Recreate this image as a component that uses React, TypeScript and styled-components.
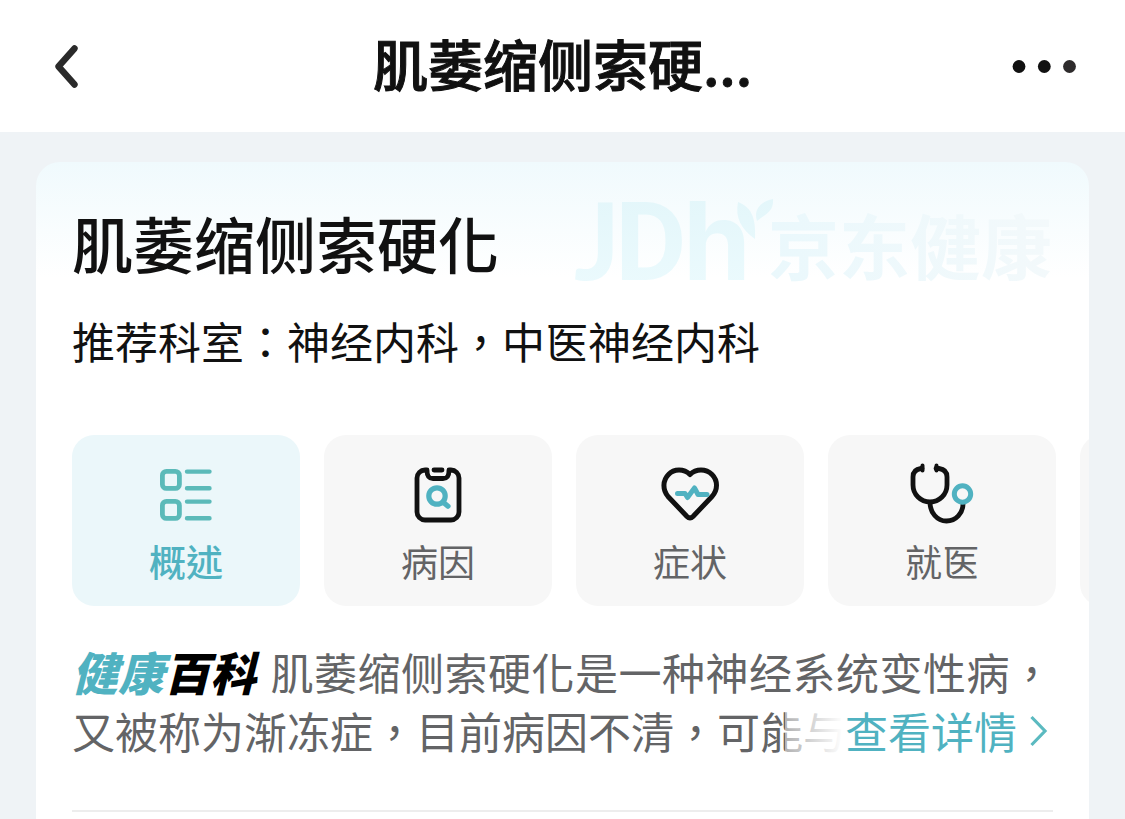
import React from "react";
import styled, { createGlobalStyle } from "styled-components";

const teal = "#50b2c1";
const ink = "#111111";
const grey = "#636466";

const GlobalStyle = createGlobalStyle`
  *, *::before, *::after { box-sizing: border-box; }
  body {
    margin: 0;
    background: #eff3f6;
    color: ${ink};
    font-family: "Noto Sans CJK TC", "Noto Sans CJK SC", sans-serif;
  }
  h1, h2, p { margin: 0; }
  button { font: inherit; color: inherit; border: 0; padding: 0; background: none; cursor: pointer; }
`;

const Screen = styled.div`
  display: flex;
  flex-direction: column;
  min-height: 100vh;
  overflow-x: hidden;
`;

const TopBar = styled.header`
  display: grid;
  grid-template-columns: 1fr auto 1fr;
  align-items: center;
  height: 132px;
  padding: 0 48px;
  background: #fff;
`;

const BarTitle = styled.h1`
  padding-bottom: 8px;
  font-size: 55px;
  line-height: 72px;
  font-weight: 500;
  white-space: nowrap;
  -webkit-text-stroke: 1px ${ink};
`;

const IconButton = styled.button<{ $end?: boolean }>`
  display: flex;
  align-items: center;
  justify-self: ${(p) => (p.$end ? "end" : "start")};
  height: 64px;
`;

const Body = styled.main`
  display: flex;
  flex: 1;
  padding: 30px 36px 0;
`;

const Card = styled.article`
  flex: 1;
  min-width: 0;
  padding: 32px 36px 0;
  border-radius: 24px 24px 0 0;
  background: linear-gradient(#f0fafd, #fff 116px);
`;

const TitleRow = styled.div`
  display: flex;
  align-items: flex-start;
  justify-content: space-between;
`;

const Title = styled.h2`
  padding-top: 12px;
  font-size: 61px;
  line-height: 74px;
  font-weight: 500;
  white-space: nowrap;
`;

const Department = styled.p`
  margin-top: 24px;
  font-size: 43px;
  line-height: 60px;
`;

const Tabs = styled.nav`
  display: flex;
  gap: 24px;
  margin: 65px -36px 0 0;
  overflow: hidden;
`;

const Tab = styled.button<{ $active?: boolean }>`
  display: flex;
  flex: none;
  flex-direction: column;
  align-items: center;
  gap: 12px;
  width: 228px;
  height: 171px;
  padding-top: 28px;
  border-radius: 22px;
  font-size: 37px;
  line-height: 44px;
  font-weight: ${(p) => (p.$active ? 500 : 400)};
  color: ${(p) => (p.$active ? teal : grey)};
  background: ${(p) => (p.$active ? "#ebf7fa" : "#f7f7f7")};
`;

const Summary = styled.section`
  position: relative;
  margin-top: 36px;
  padding-bottom: 50px;
  border-bottom: 2px solid #ededed;
`;

const Excerpt = styled.p`
  height: 118px;
  overflow: hidden;
  font-size: 43px;
  line-height: 59px;
  text-align: justify;
  color: ${grey};
`;

const Badge = styled.strong`
  display: inline-block;
  margin-right: 14px;
  font-family: "Noto Sans CJK SC", sans-serif;
  font-size: 46px;
  line-height: 59px;
  font-weight: 900;
  font-style: italic;
  vertical-align: top;
  color: #000;
`;

const BadgeAccent = styled.span`
  color: ${teal};
`;

const MoreLink = styled.a`
  position: absolute;
  top: 59px;
  right: 0;
  display: flex;
  align-items: center;
  gap: 12px;
  padding-left: 60px;
  font-size: 43px;
  line-height: 59px;
  color: ${teal};
  text-decoration: none;
  background: linear-gradient(to right, rgba(255, 255, 255, 0.5), #fff 58px);
`;

const BackIcon = () => (
  <svg width="40" height="48" viewBox="0 0 40 48" fill="none" aria-hidden="true">
    <path d="M26.500 6.500L10.500 24.500L26.500 42.500" stroke="#2a2a2a" strokeWidth="6.400" strokeLinecap="round" strokeLinejoin="round" />
  </svg>
);

const DotsIcon = () => (
  <svg width="66" height="16" viewBox="0 0 66 16" aria-hidden="true">
    <circle cx="8" cy="8.5" r="6.4" fill={ink} />
    <circle cx="33.3" cy="8.5" r="6.4" fill={ink} />
    <circle cx="58.5" cy="8.5" r="6.4" fill="#2e2b2c" />
  </svg>
);

const Watermark = () => (
  <svg width="481" height="92" viewBox="0 0 481 92" aria-hidden="true">
    <defs>
      <linearGradient id="markLatin" x1="0" y1="0" x2="0" y2="92" gradientUnits="userSpaceOnUse">
        <stop offset="0" stopColor="#e3f6fa" />
        <stop offset="1" stopColor="#ebfafd" />
      </linearGradient>
      <linearGradient id="markName" x1="195" y1="0" x2="481" y2="0" gradientUnits="userSpaceOnUse">
        <stop offset="0" stopColor="#eaf8fc" />
        <stop offset="1" stopColor="#f3f9fb" />
      </linearGradient>
    </defs>
    <g fill="url(#markLatin)" fontFamily="Roboto, sans-serif" fontWeight="700" fontSize="110">
      <text x="2" y="86" fontFamily="Lato, sans-serif" fontSize="108">J</text>
      <text x="43" y="86">D</text>
      <text x="111" y="86" fontFamily="Inter, sans-serif" fontSize="109">h</text>
      <path d="M166 8 C178 13 184 21 183 45 C169 35 163 24 166 8Z" />
      <path d="M201 5 C202 18 193 20 185 27 C181 15 190 7 201 5Z" />
    </g>
    <text x="196" y="80" fill="url(#markName)" fontFamily="'Noto Sans CJK SC', sans-serif" fontWeight="700" fontSize="71">
      京东健康
    </text>
  </svg>
);

const TabSvg = styled.svg.attrs({ viewBox: "0 0 64 64", fill: "none", "aria-hidden": true })`
  flex: none;
  width: 64px;
  height: 64px;
  overflow: visible;
  stroke-linecap: round;
  stroke-linejoin: round;
`;

const OverviewIcon = () => (
  <TabSvg stroke="#5bbab9" strokeWidth="4.8">
    <rect x="8.4" y="8.4" width="17" height="17" rx="4" />
    <rect x="8.4" y="38.4" width="17" height="17" rx="4" />
    <path d="M33 8.6H55.5M33 25.2H55.5M33 38.6H55.5M33 55.2H55.5" strokeWidth="4.4" />
  </TabSvg>
);

const CauseIcon = () => (
  <TabSvg stroke={ink} strokeWidth="4.8">
    <path d="M21 7H19A8 8 0 0 0 11 15V49A8 8 0 0 0 19 57H45A8 8 0 0 0 53 49V15A8 8 0 0 0 45 7H43C43 12 42 15.500 37 15.500H27C22 15.500 21 12 21 7Z" />
    <path d="M28 7H36" />
    <g stroke={teal} strokeWidth="5.200">
      <circle cx="31" cy="33" r="8.200" />
      <path d="M37.500 39.500L42 43.200" />
    </g>
  </TabSvg>
);

const SymptomIcon = () => (
  <TabSvg stroke={ink} strokeWidth="5">
    <path d="M32 11.500C26 5.500 16 5.500 10.500 11.500C4.500 17.500 4.500 27 10 33.500L29 53.500Q32 56.500 35 53.500L54 33.500C60 27 60 17.500 54 11.500C48 5.500 38 5.500 32 11.500Z" />
    <path d="M19.500 30.500H27L29.500 34.500L36.500 25L40 31.500H49" stroke={teal} strokeWidth="5" />
  </TabSvg>
);

const ClinicIcon = () => (
  <TabSvg stroke={ink} strokeWidth="4.800">
    <path d="M12 5.500H11Q3 6.500 3 14V22A17 17 0 0 0 37 22V14Q37 6.500 29 5.500H26" />
    <path d="M12.500 2.500V7.500M26.500 2.500V7.500" strokeWidth="4" />
    <path d="M20 39.500C20 49.500 27 58 36.500 58S53 50 53 41" strokeLinecap="butt" />
    <circle cx="52.500" cy="31" r="8.200" stroke={teal} strokeWidth="5" />
  </TabSvg>
);

const MoreArrow = () => (
  <svg width="24" height="40" viewBox="0 0 24 40" fill="none" aria-hidden="true">
    <path d="M2.500 6L16 20L2.500 34" stroke="#5bbac0" strokeWidth="3.200" />
  </svg>
);

const tabs = [
  { label: "概述", Icon: OverviewIcon },
  { label: "病因", Icon: CauseIcon },
  { label: "症状", Icon: SymptomIcon },
  { label: "就医", Icon: ClinicIcon },
];

export default function App() {
  return (
    <>
      <GlobalStyle />
      <Screen>
        <TopBar>
          <IconButton aria-label="返回">
            <BackIcon />
          </IconButton>
          <BarTitle>肌萎缩侧索硬...</BarTitle>
          <IconButton $end aria-label="更多">
            <DotsIcon />
          </IconButton>
        </TopBar>
        <Body>
          <Card>
            <TitleRow>
              <Title>肌萎缩侧索硬化</Title>
              <Watermark />
            </TitleRow>
            <Department>推荐科室：神经内科，中医神经内科</Department>
            <Tabs>
              {tabs.map(({ label, Icon }, i) => (
                <Tab key={label} $active={i === 0}>
                  <Icon />
                  {label}
                </Tab>
              ))}
              <Tab aria-label="更多分类" />
            </Tabs>
            <Summary>
              <Excerpt>
                <Badge>
                  <BadgeAccent>健康</BadgeAccent>百科
                </Badge>
                肌萎缩侧索硬化是一种神经系统变性病，又被称为渐冻症，目前病因不清，可能与
              </Excerpt>
              <MoreLink href="#detail">
                查看详情
                <MoreArrow />
              </MoreLink>
            </Summary>
          </Card>
        </Body>
      </Screen>
    </>
  );
}
